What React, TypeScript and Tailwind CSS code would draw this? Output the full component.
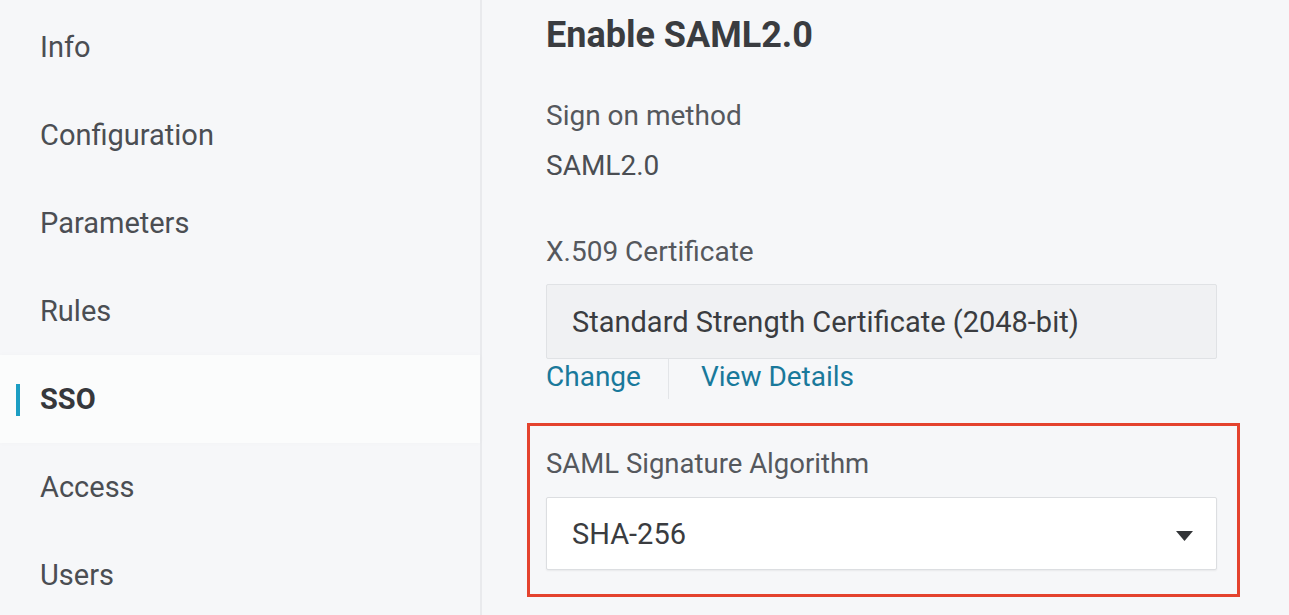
import React from "react";

const items = ["Info", "Configuration", "Parameters", "Rules", "SSO", "Access", "Users"];

export default function App() {
  return (
    <div
      className="flex h-[615px] w-[1289px] overflow-hidden bg-[#f6f7f9] text-[#4b4e53]"
      style={{ fontFamily: "Roboto, 'Noto Sans', sans-serif" }}
    >
      {/* Sidebar */}
      <aside className="w-[482px] shrink-0 border-r-2 border-[#e9eaed] pt-[3px]">
        {items.map((it) => {
          const active = it === "SSO";
          return (
            <div
              key={it}
              className={
                active
                  ? "relative flex h-[88px] items-center bg-[#fbfcfc] pl-[40px] shadow-[0_0_6px_rgba(0,0,0,0.025)]"
                  : "relative flex h-[88px] items-center pl-[40px]"
              }
            >
              {active && (
                <span className="absolute left-[16px] top-[29px] h-[32px] w-[4px] bg-[#1c9ec3]" />
              )}
              <span
                className={
                  active
                    ? "text-[29px] font-bold leading-[36px] text-[#36383c]"
                    : "text-[29px] leading-[36px] text-[#4b4e53]"
                }
              >
                {it}
              </span>
            </div>
          );
        })}
      </aside>

      {/* Main */}
      <main className="flex-1 pl-[64px] pt-[13px]">
        <div className="w-[671px]">
          <h1 className="text-[36px] font-bold leading-[44px] text-[#3a3c40]">Enable SAML2.0</h1>

          <div className="mt-[41px] text-[28px] leading-[36px] text-[#55585d]">Sign on method</div>
          <div className="mt-[14px] text-[28px] leading-[36px] text-[#4b4e53]">SAML2.0</div>

          <div className="mt-[50px] text-[28px] leading-[36px] text-[#55585d]">X.509 Certificate</div>
          <div className="mt-[14px] flex h-[75px] items-center rounded-[2px] border border-[#e0e2e5] bg-[#f0f1f3] pl-[25px]">
            <span className="text-[29px] leading-[36px] text-[#3a3c40]">
              Standard Strength Certificate (2048-bit)
            </span>
          </div>

          <div className="flex h-[40px] items-start">
            <span className="pr-[27px] text-[28px] leading-[36px] text-[#19799b]">Change</span>
            <span className="h-[40px] w-[1px] bg-[#e3e5e8]" />
            <span className="pl-[32px] text-[28px] leading-[36px] text-[#19799b]">View Details</span>
          </div>

          <div className="ml-[-19px] mt-[24px] w-[713px] border-[3px] border-[#e4432e] pb-[24px] pl-[16px] pr-[20px] pt-[20px]">
            <div className="text-[27.5px] leading-[36px] text-[#55585d]">SAML Signature Algorithm</div>
            <div className="mt-[15px] flex h-[73px] items-center justify-between rounded-[2px] border border-[#dcdee1] bg-white pl-[25px] pr-[23px] shadow-[0_1px_2px_rgba(0,0,0,0.06)]">
              <span className="text-[29px] leading-[36px] text-[#3a3c40]">SHA-256</span>
              <svg width="17" height="10" viewBox="0 0 17 10" className="mt-[5px]">
                <path d="M0 0 L17 0 L8.5 10 Z" fill="#333538" />
              </svg>
            </div>
          </div>
        </div>
      </main>
    </div>
  );
}
